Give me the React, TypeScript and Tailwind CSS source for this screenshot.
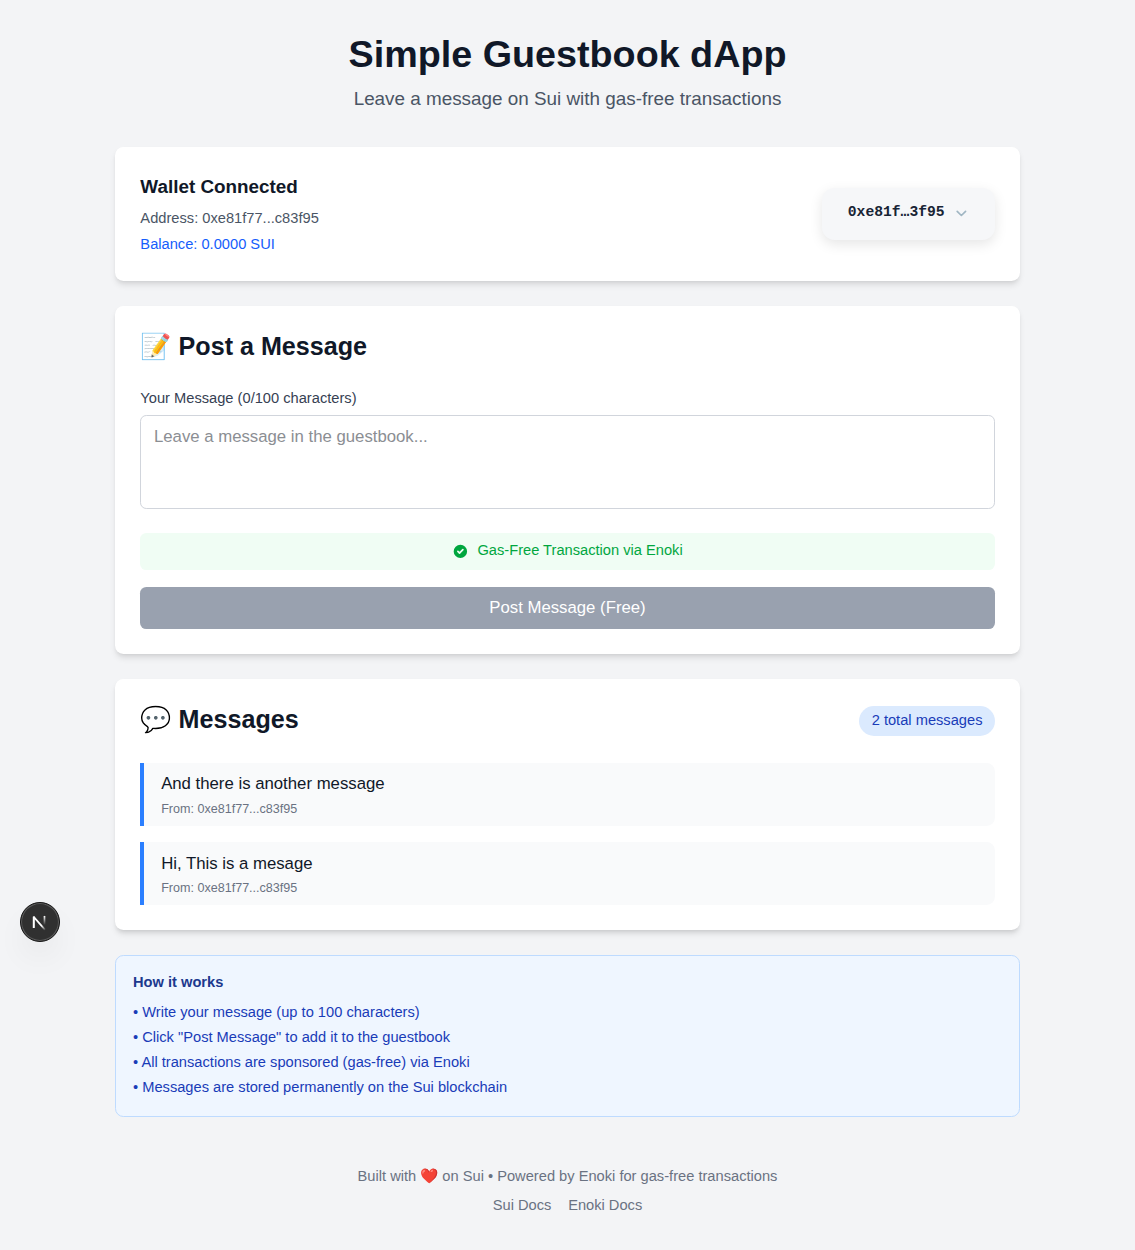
import React, { useState } from "react";

const messages = [
  { text: "And there is another message", from: "0xe81f77...c83f95" },
  { text: "Hi, This is a mesage", from: "0xe81f77...c83f95" },
];

const steps = [
  "Write your message (up to 100 characters)",
  'Click "Post Message" to add it to the guestbook',
  "All transactions are sponsored (gas-free) via Enoki",
  "Messages are stored permanently on the Sui blockchain",
];

function Card({ children }: { children: React.ReactNode }) {
  return <section className="mb-6 rounded-lg bg-white p-6 shadow-md">{children}</section>;
}

function WalletCard() {
  return (
    <Card>
      <div className="flex items-center justify-between">
        <div className="h-20 pl-[0.4px]">
          <h2 className="text-lg font-semibold text-gray-900">Wallet Connected</h2>
          <p className="mt-[6.5px] text-sm text-gray-600">Address: 0xe81f77...c83f95</p>
          <p className="mt-[4.5px] text-sm text-blue-600">Balance: 0.0000 SUI</p>
        </div>
        <button className="flex h-[50px] w-[165px] items-center gap-2 rounded-xl bg-[#f6f7f9] pr-6 pb-[3px] pl-[24.5px] font-['Liberation_Mono',monospace] text-sm font-bold text-[#182435] shadow-[0_4px_12px_rgba(0,0,0,0.1)]">
          <span>0xe81f…3f95</span>
          <svg className="mt-0.5 size-4" viewBox="0 0 16 16" fill="none" stroke="#a0b6c3" strokeWidth="1.6" strokeLinecap="round" strokeLinejoin="round">
            <path d="M4 6 8 10 12 6" />
          </svg>
        </button>
      </div>
    </Card>
  );
}

function PostCard() {
  const [message, setMessage] = useState("");
  return (
    <Card>
      <h2 className="-mt-px mb-[23.5px] text-2xl font-bold text-gray-900">
        📝<span className="pl-[0.6px]"> Post a Message</span>
      </h2>
      <label className="mb-[5.5px] block pl-[0.4px] text-sm font-medium text-gray-700" htmlFor="message">
        Your Message ({message.length}/100 characters)
      </label>
      <textarea
        id="message"
        rows={3}
        maxLength={100}
        value={message}
        onChange={(e) => setMessage(e.target.value)}
        placeholder="Leave a message in the guestbook..."
        className="mb-[22.6px] block h-[90px] w-full resize-none rounded-md border border-gray-300 px-[12.4px] py-2 placeholder:text-[#8b8e93]"
      />
      <div className="mb-[15.8px] flex items-center justify-center rounded-md bg-green-50 pt-[6.8px] pb-[9px] text-sm text-green-600">
        <svg className="mt-[1.6px] mr-2 size-4" viewBox="0 0 20 20" fill="currentColor">
          <path
            fillRule="evenodd"
            clipRule="evenodd"
            d="M10 18a8 8 0 100-16 8 8 0 000 16zm3.707-9.293a1 1 0 00-1.414-1.414L9 10.586 7.707 9.293a1 1 0 00-1.414 1.414l2 2a1 1 0 001.414 0l4-4z"
          />
        </svg>
        <span>Gas-Free Transaction via Enoki</span>
      </div>
      <button className="block w-full rounded-md bg-gray-400 pt-[7.8px] pb-[8.2px] font-medium text-white">Post Message (Free)</button>
    </Card>
  );
}

function MessagesCard() {
  return (
    <Card>
      <div className="mb-6 flex items-center justify-between">
        <h2 className="-mt-px mb-px text-2xl font-bold text-gray-900">
          💬<span className="pl-[0.6px]"> Messages</span>
        </h2>
        <span className="rounded-full bg-blue-100 px-3 py-1 text-sm text-blue-800">{messages.length} total messages</span>
      </div>
      <div className="space-y-4">
        {messages.map((m) => (
          <div key={m.text} className="rounded-r-lg border-l-4 border-blue-500 bg-gray-50 py-2 pl-[16.4px]">
            <p className="text-gray-900">{m.text}</p>
            <p className="mt-1 text-xs text-gray-500">From: {m.from}</p>
          </div>
        ))}
      </div>
    </Card>
  );
}

function DevBadge() {
  return (
    <div className="fixed top-[860.8px] left-[19px] flex size-[38px] items-center justify-center rounded-full border border-[#171717] bg-[#303030] shadow-[inset_0_0_0_1px_#5c5c5c,0_16px_32px_-8px_rgba(0,0,0,0.12)]">
      <svg className="size-[38px] shrink-0" viewBox="0 0 40 40" fill="none">
        <defs>
          <linearGradient id="diagonal" x1="20" y1="20" x2="26" y2="28" gradientUnits="userSpaceOnUse">
            <stop offset="0.4" stopColor="white" />
            <stop offset="1" stopColor="white" stopOpacity="0" />
          </linearGradient>
          <linearGradient id="stem" x1="25" y1="14" x2="25" y2="23" gradientUnits="userSpaceOnUse">
            <stop stopColor="white" />
            <stop offset="1" stopColor="white" stopOpacity="0" />
          </linearGradient>
        </defs>
        <path d="M13.8 26V15L25.2 28" stroke="url(#diagonal)" strokeWidth="1.7" strokeLinejoin="bevel" />
        <path d="M13.8 26V14.5" stroke="white" strokeWidth="1.7" />
        <path d="M24.6 14V23.5" stroke="url(#stem)" strokeWidth="1.7" />
      </svg>
    </div>
  );
}

export default function App() {
  return (
    <div className="min-h-[1192.8px] bg-gray-100 font-['Liberation_Sans',Arial,sans-serif] [zoom:1.0479]">
      <div className="mx-auto max-w-4xl px-4 pt-8">
        <header className="mb-8 text-center">
          <h1 className="mb-2 text-4xl font-bold text-gray-900">Simple Guestbook dApp</h1>
          <p className="text-lg text-gray-600">Leave a message on Sui with gas-free transactions</p>
        </header>

        <main>
          <WalletCard />
          <PostCard />
          <MessagesCard />
          <section className="-mt-[0.5px] rounded-lg border border-blue-200 bg-blue-50 px-[16.4px] pt-[15.4px] pb-[17.2px] text-sm">
            <h3 className="mb-[8.5px] font-semibold text-blue-900">How it works</h3>
            <ul className="space-y-[3.85px] text-blue-800">
              {steps.map((s) => (
                <li key={s}>• {s}</li>
              ))}
            </ul>
          </section>
        </main>

        <footer className="mt-[47px] text-center text-sm text-gray-500">
          <p>Built with ❤️ on Sui • Powered by Enoki for gas-free transactions</p>
          <div className="mt-[7.5px] flex justify-center gap-4">
            <a href="#sui">Sui Docs</a>
            <a href="#enoki">Enoki Docs</a>
          </div>
        </footer>
      </div>
      <DevBadge />
    </div>
  );
}
